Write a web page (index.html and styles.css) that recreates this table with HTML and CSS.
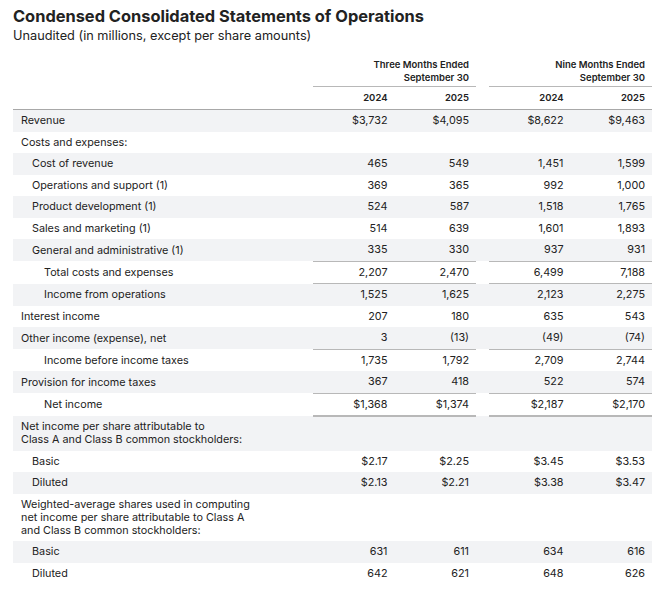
FILE: index.html
```html
<!DOCTYPE html>
<html lang="en">
<head>
<meta charset="utf-8">
<title>Condensed Consolidated Statements of Operations</title>
<link rel="stylesheet" href="styles.css">
</head>
<body>
<main class="page">
  <h1 class="title">Condensed Consolidated Statements of Operations</h1>
  <p class="subtitle">Unaudited (in millions, except per share amounts)</p>
  <table class="fin">
    <colgroup>
      <col class="c-label"><col class="c-num"><col class="c-num"><col class="c-gap"><col class="c-num"><col class="c-num">
    </colgroup>
    <thead>
      <tr class="h-group">
        <th class="lbl"></th>
        <th class="grp" colspan="2">Three Months Ended<br>September 30</th>
        <th class="gap"></th>
        <th class="grp" colspan="2">Nine Months Ended<br>September 30</th>
      </tr>
      <tr class="h-year">
        <th class="lbl"></th>
        <th>2024</th><th>2025</th><th class="gap"></th><th>2024</th><th>2025</th>
      </tr>
    </thead>
    <tbody>
      <tr class="shade"><td class="lbl">Revenue</td><td>$3,732</td><td>$4,095</td><td class="gap"></td><td>$8,622</td><td>$9,463</td></tr>
      <tr><td class="lbl">Costs and expenses:</td><td></td><td></td><td class="gap"></td><td></td><td></td></tr>
      <tr class="shade"><td class="lbl i1">Cost of revenue</td><td>465</td><td>549</td><td class="gap"></td><td>1,451</td><td>1,599</td></tr>
      <tr><td class="lbl i1">Operations and support (1)</td><td>369</td><td>365</td><td class="gap"></td><td>992</td><td>1,000</td></tr>
      <tr class="shade"><td class="lbl i1">Product development (1)</td><td>524</td><td>587</td><td class="gap"></td><td>1,518</td><td>1,765</td></tr>
      <tr><td class="lbl i1">Sales and marketing (1)</td><td>514</td><td>639</td><td class="gap"></td><td>1,601</td><td>1,893</td></tr>
      <tr class="shade"><td class="lbl i1">General and administrative (1)</td><td>335</td><td>330</td><td class="gap"></td><td>937</td><td>931</td></tr>
      <tr class="total"><td class="lbl i2">Total costs and expenses</td><td>2,207</td><td>2,470</td><td class="gap"></td><td>6,499</td><td>7,188</td></tr>
      <tr class="shade total"><td class="lbl i2">Income from operations</td><td>1,525</td><td>1,625</td><td class="gap"></td><td>2,123</td><td>2,275</td></tr>
      <tr><td class="lbl">Interest income</td><td>207</td><td>180</td><td class="gap"></td><td>635</td><td>543</td></tr>
      <tr class="shade"><td class="lbl">Other income (expense), net</td><td>3</td><td>(13)</td><td class="gap"></td><td>(49)</td><td>(74)</td></tr>
      <tr class="total"><td class="lbl i2">Income before income taxes</td><td>1,735</td><td>1,792</td><td class="gap"></td><td>2,709</td><td>2,744</td></tr>
      <tr class="shade"><td class="lbl">Provision for income taxes</td><td>367</td><td>418</td><td class="gap"></td><td>522</td><td>574</td></tr>
      <tr class="total grand"><td class="lbl i2">Net income</td><td>$1,368</td><td>$1,374</td><td class="gap"></td><td>$2,187</td><td>$2,170</td></tr>
      <tr class="shade"><td class="lbl">Net income per share attributable to<br>Class A and Class B common stockholders:</td><td></td><td></td><td class="gap"></td><td></td><td></td></tr>
      <tr><td class="lbl i1">Basic</td><td>$2.17</td><td>$2.25</td><td class="gap"></td><td>$3.45</td><td>$3.53</td></tr>
      <tr class="shade"><td class="lbl i1">Diluted</td><td>$2.13</td><td>$2.21</td><td class="gap"></td><td>$3.38</td><td>$3.47</td></tr>
      <tr><td class="lbl">Weighted-average shares used in computing<br>net income per share attributable to Class A<br>and Class B common stockholders:</td><td></td><td></td><td class="gap"></td><td></td><td></td></tr>
      <tr class="shade"><td class="lbl i1">Basic</td><td>631</td><td>611</td><td class="gap"></td><td>634</td><td>616</td></tr>
      <tr><td class="lbl i1">Diluted</td><td>642</td><td>621</td><td class="gap"></td><td>648</td><td>626</td></tr>
    </tbody>
  </table>
</main>
</body>
</html>
```

FILE: styles.css
```css
html, body {
  margin: 0;
  background: #ffffff;
}

body {
  font-family: Inter, "Noto Sans", "Liberation Sans", sans-serif;
  color: #222222;
}

.page {
  padding: 6px 5px 0 13px;
}

.title {
  margin: 0;
  font-size: 16.4px;
  line-height: 20px;
  font-weight: 700;
  color: #222222;
}

.subtitle {
  margin: 0;
  font-size: 12.75px;
  line-height: 19px;
  font-weight: 400;
  color: #222222;
}

.fin {
  margin-top: 9px;
  width: 639px;
  border-collapse: collapse;
  table-layout: fixed;
  font-size: 10.8px;
  line-height: 13px;
}

.c-label { width: 300px; }
.c-num { width: 81.5px; }
.c-gap { width: 13px; }

.fin th,
.fin td {
  padding: 4.25px 7px;
  text-align: right;
  vertical-align: middle;
  white-space: nowrap;
}

.fin .lbl {
  text-align: left;
  padding-left: 8px;
}

.fin .gap {
  padding: 0;
}

.fin .i1 { padding-left: 19px; }
.fin .i2 { padding-left: 31px; }

.h-group th {
  font-size: 9.5px;
  font-weight: 600;
  padding-top: 4px;
  padding-bottom: 2px;
}

.h-group .grp {
  border-bottom: 1px solid #b8b8b8;
}

.h-year th {
  font-size: 9.5px;
  font-weight: 600;
  padding-top: 4px;
  padding-bottom: 5px;
  border-bottom: 1px solid #a8a8a8;
}

.shade td {
  background: #f2f3f5;
}

.total td:not(.lbl):not(.gap) {
  border-top: 1px solid #b8b8b8;
}

.grand td:not(.lbl):not(.gap) {
  border-bottom: 2px solid #b8b8b8;
}
```
